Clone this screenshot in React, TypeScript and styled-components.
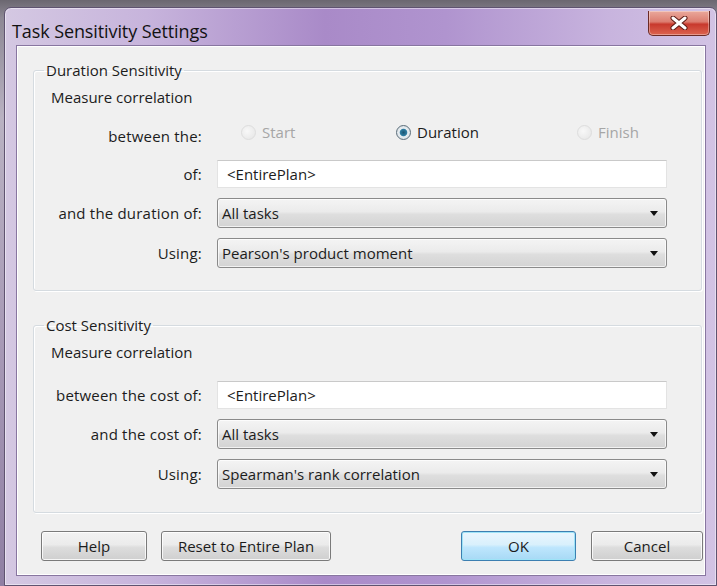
import React from 'react';
import styled, { createGlobalStyle, css } from 'styled-components';

const GlobalStyle = createGlobalStyle`
  html, body {
    margin: 0;
    padding: 0;
  }
  body {
    background: linear-gradient(180deg, #6b6770 0%, #8d8894 3%, #b9b2c2 20%, #a799b6 60%, #8f7fa3 100%);
    font-family: "Segoe UI", "Open Sans", "Noto Sans", sans-serif;
    color: #1c1c1c;
    width: 717px;
    height: 586px;
    overflow: hidden;
  }
`;

const Window = styled.div`
  margin: 7px 0 0 4px;
  width: 713px;
  height: 579px;
  box-sizing: border-box;
  border: 1px solid #5f5370;
  border-radius: 7px 7px 0 0;
  background: linear-gradient(
    90deg,
    #d4c8e2 0%,
    #c7b4dc 20%,
    #a98ac8 45%,
    #b094cf 62%,
    #c8b4de 85%,
    #d2c3e4 100%
  );
  padding: 0 10px 9px 11px;
  display: flex;
  flex-direction: column;
  box-shadow: inset 0 0 0 1px rgba(255, 255, 255, 0.45);
`;

const TitleBar = styled.div`
  height: 37px;
  display: flex;
  align-items: flex-start;
  justify-content: space-between;
`;

const Title = styled.span`
  font-size: 18px;
  margin: 11px 0 0 -4px;
  color: #121212;
  letter-spacing: -0.1px;
`;

const CloseButton = styled.div`
  width: 60px;
  height: 24px;
  margin-top: 3px;
  margin-right: -4px;
  border: 1px solid #6b2a25;
  border-top: none;
  border-radius: 0 0 5px 5px;
  background: linear-gradient(180deg, #eaa99c 0%, #dc7d70 45%, #c8392d 55%, #dc6450 100%);
  box-shadow: inset 0 0 0 1px rgba(255, 255, 255, 0.35);
  display: flex;
  align-items: center;
  justify-content: center;
`;

const Client = styled.div`
  flex: 1;
  background: #f0f0f0;
  border: 1px solid #8876a0;
  box-shadow: inset 0 0 0 1px #ffffff;
  padding: 14px 5px 0 16px;
  display: flex;
  flex-direction: column;
`;

const Group = styled.fieldset<{ $height: number }>`
  margin: 0;
  height: ${(p) => p.$height}px;
  box-sizing: border-box;
  border: 1px solid #d5dbe0;
  border-radius: 3px;
  box-shadow: inset 1px 1px 0 #ffffff, 1px 1px 0 #ffffff;
  padding: 0 34px 0 17px;
  & + & {
    margin-top: 24px;
  }
`;

const Legend = styled.legend`
  font-size: 15px;
  padding: 0 2px 0 2px;
  margin-left: -7px;
  line-height: 20px;
`;

const Caption = styled.div<{ $top: number }>`
  font-size: 15px;
  line-height: 20px;
  margin-top: ${(p) => p.$top}px;
`;

const Form = styled.div<{ $top: number }>`
  display: grid;
  grid-template-columns: 153px 450px;
  column-gap: 13px;
  row-gap: 10px;
  align-items: center;
  margin-top: ${(p) => p.$top}px;
`;

const Label = styled.div`
  font-size: 15px;
  text-align: right;
  white-space: nowrap;
  padding-right: 2px;
  letter-spacing: 0.2px;
`;

const RadioRow = styled.div`
  display: grid;
  grid-template-columns: 155px 181px auto;
  padding-left: 24px;
  height: 20px;
  margin-bottom: 8px;
`;

const RadioItem = styled.label<{ $disabled?: boolean }>`
  display: flex;
  align-items: center;
  gap: 6px;
  font-size: 15px;
  color: ${(p) => (p.$disabled ? '#a6a6a6' : '#1c1c1c')};
`;

const RadioDot = styled.span<{ $checked?: boolean; $disabled?: boolean }>`
  width: 15px;
  height: 15px;
  border-radius: 50%;
  box-sizing: border-box;
  ${(p) =>
    p.$disabled
      ? css`
          border: 1px solid #dddddd;
          background: radial-gradient(circle at 40% 40%, #f8f8f8 0%, #e4e4e4 100%);
        `
      : css`
          border: 1px solid #5b6d7a;
          background: radial-gradient(circle at 50% 50%, #1b5573 0%, #2f7ea2 36%, #e8eef2 46%, #cfd7dd 100%);
        `}
`;

const TextField = styled.div`
  height: 28px;
  box-sizing: border-box;
  background: #ffffff;
  border: 1px solid #e3e3e3;
  border-top-color: #c9c9c9;
  font-size: 15px;
  padding: 0 9px;
  display: flex;
  align-items: center;
`;

const Select = styled.div`
  height: 30px;
  box-sizing: border-box;
  border: 1px solid #8a8a8a;
  border-radius: 3px;
  background: linear-gradient(180deg, #f4f4f4 0%, #ebebeb 45%, #dedede 55%, #d3d3d3 100%);
  box-shadow: inset 0 0 0 1px rgba(255, 255, 255, 0.7);
  font-size: 15px;
  padding: 0 8px 0 4px;
  display: flex;
  align-items: center;
  justify-content: space-between;
`;

const Arrow = styled.span`
  width: 0;
  height: 0;
  border-left: 4px solid transparent;
  border-right: 4px solid transparent;
  border-top: 5px solid #111111;
`;

const ButtonBar = styled.div`
  display: flex;
  align-items: center;
  margin: 18px -3px 0 0;
  padding-left: 8px;
`;

const Button = styled.div<{ $width: number; $primary?: boolean; $gap?: number }>`
  width: ${(p) => p.$width}px;
  height: 30px;
  margin-left: ${(p) => p.$gap ?? 0}px;
  box-sizing: border-box;
  border-radius: 3px;
  font-size: 15px;
  display: flex;
  align-items: center;
  justify-content: center;
  border: 1px solid ${(p) => (p.$primary ? '#3c7fb1' : '#7a7a7a')};
  background: ${(p) =>
    p.$primary
      ? 'linear-gradient(180deg, #eaf6fd 0%, #d9f0fc 45%, #bee6fd 55%, #a7d9f5 100%)'
      : 'linear-gradient(180deg, #f2f2f2 0%, #ebebeb 45%, #dddddd 55%, #cfcfcf 100%)'};
  box-shadow: inset 0 0 0 1px ${(p) => (p.$primary ? '#9ee3f7' : 'rgba(255,255,255,0.8)')};
`;

const Spacer = styled.div`
  flex: 1;
`;

function CloseGlyph() {
  return (
    <svg width="18" height="14" viewBox="0 0 18 14">
      <path
        d="M3 2 L15 12 M15 2 L3 12"
        stroke="#5a1a14"
        strokeWidth="5"
        strokeLinecap="round"
      />
      <path
        d="M3 2 L15 12 M15 2 L3 12"
        stroke="#ffffff"
        strokeWidth="3"
        strokeLinecap="round"
      />
    </svg>
  );
}

export default function App() {
  return (
    <>
      <GlobalStyle />
      <Window>
        <TitleBar>
          <Title>Task Sensitivity Settings</Title>
          <CloseButton>
            <CloseGlyph />
          </CloseButton>
        </TitleBar>
        <Client>
          <Group $height={231}>
            <Legend>Duration Sensitivity</Legend>
            <Caption $top={7}>Measure correlation</Caption>
            <Form $top={15}>
              <Label>between the:</Label>
              <RadioRow>
                <RadioItem $disabled>
                  <RadioDot $disabled />
                  Start
                </RadioItem>
                <RadioItem>
                  <RadioDot $checked />
                  Duration
                </RadioItem>
                <RadioItem $disabled>
                  <RadioDot $disabled />
                  Finish
                </RadioItem>
              </RadioRow>
              <Label>of:</Label>
              <TextField>&lt;EntirePlan&gt;</TextField>
              <Label>and the duration of:</Label>
              <Select>
                All tasks
                <Arrow />
              </Select>
              <Label>Using:</Label>
              <Select>
                Pearson's product moment
                <Arrow />
              </Select>
            </Form>
          </Group>
          <Group $height={198}>
            <Legend>Cost Sensitivity</Legend>
            <Caption $top={7}>Measure correlation</Caption>
            <Form $top={19}>
              <Label>between the cost of:</Label>
              <TextField>&lt;EntirePlan&gt;</TextField>
              <Label>and the cost of:</Label>
              <Select>
                All tasks
                <Arrow />
              </Select>
              <Label>Using:</Label>
              <Select>
                Spearman's rank correlation
                <Arrow />
              </Select>
            </Form>
          </Group>
          <ButtonBar>
            <Button $width={106}>Help</Button>
            <Button $width={170} $gap={14}>
              Reset to Entire Plan
            </Button>
            <Spacer />
            <Button $width={115} $primary>
              OK
            </Button>
            <Button $width={112} $gap={15}>
              Cancel
            </Button>
          </ButtonBar>
        </Client>
      </Window>
    </>
  );
}
